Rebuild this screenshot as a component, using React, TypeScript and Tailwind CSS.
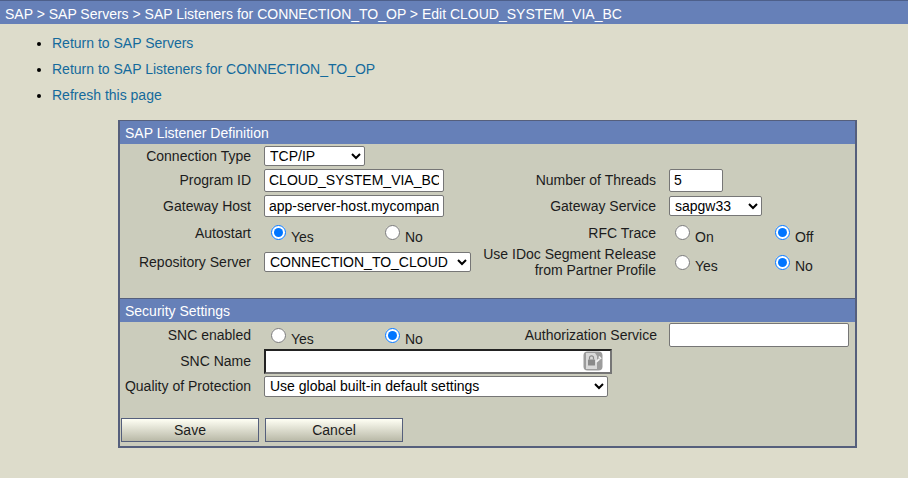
import { ReactNode } from "react";

function Label({ children, width = "w-[131px]" }: { children: ReactNode; width?: string }) {
  return <div className={`${width} shrink-0 text-right leading-4`}>{children}</div>;
}

function Radio({ label, checked, name, width }: { label: string; checked?: boolean; name: string; width: string }) {
  return (
    <label className={`${width} flex items-center shrink-0`}>
      <input type="radio" name={name} defaultChecked={checked} className="w-[15px] h-[15px] m-0" />
      <span className="ml-[5px] mt-2 leading-4">{label}</span>
    </label>
  );
}

function SectionHeader({ title }: { title: string }) {
  return <div className="h-[23px] bg-[#6680b8] text-white pl-[5px] leading-[24px]">{title}</div>;
}

const inputCls = "bg-white border border-[#767676] rounded-[2px] px-[4px] text-black outline-none";
const selectCls = "bg-white border border-[#767676] rounded-[2px] text-black pl-[1px]";

function KeyIcon() {
  return (
    <svg width="20" height="20" viewBox="0 0 20 20" className="shrink-0">
      <rect x="0.5" y="0.5" width="19" height="19" rx="4" fill="#9c9c9c" />
      <path d="M3 2 H12 L14 5 V18 H3 Z" fill="#d9d9d9" />
      <rect x="5" y="8.5" width="7" height="6" rx="0.5" fill="#8a8a8a" />
      <path d="M6.5 8.5 V6.8 a2 2 0 0 1 4 0 V8.5" fill="none" stroke="#8a8a8a" strokeWidth="1.2" />
      <path d="M13 11 L16.5 8 M16 5.5 L18 8" fill="none" stroke="#f0f0f0" strokeWidth="1.8" />
    </svg>
  );
}

export default function App() {
  return (
    <div className="min-h-[478px] bg-[#dddccb] text-[14px] text-[#1c1c1c] font-['Liberation_Sans',Arial,sans-serif]">
      <div className="h-6 bg-[#6680b8] border-t border-t-[#4d5f8a] text-white pl-[5px] leading-[26px]">
        SAP &gt; SAP Servers &gt; SAP Listeners for CONNECTION_TO_OP &gt; Edit CLOUD_SYSTEM_VIA_BC
      </div>

      <ul className="list-disc pl-[52px] pt-[10px] marker:text-black">
        {["Return to SAP Servers", "Return to SAP Listeners for CONNECTION_TO_OP", "Refresh this page"].map((t) => (
          <li key={t} className="h-[26px] leading-4 pt-[1px]">
            <a href="#" className="text-[#146a9c]">{t}</a>
          </li>
        ))}
      </ul>

      <div className="w-[739px] ml-[118px] mt-[8px] border-2 border-t-1 border-[#555f7c] bg-[#cbccbc]">
        <SectionHeader title="SAP Listener Definition" />

        {/* listener definition rows */}
        <div className="h-[154px]">
          <div className="flex items-center h-[23px] pt-[1px]">
            <Label>Connection Type</Label>
            <select defaultValue="TCP/IP" className={`${selectCls} ml-[13px] w-[101px] h-[20px]`}>
              <option>TCP/IP</option>
            </select>
          </div>
          <div className="flex items-center h-[26px]">
            <Label>Program ID</Label>
            <input defaultValue="CLOUD_SYSTEM_VIA_BC" className={`${inputCls} ml-[13px] w-[180px] h-[23px]`} />
            <Label width="w-[212px]">Number of Threads</Label>
            <input defaultValue="5" className={`${inputCls} ml-[13px] w-[54px] h-[23px]`} />
          </div>
          <div className="flex items-center h-[25px]">
            <Label>Gateway Host</Label>
            <input defaultValue="app-server-host.mycompany.com" className={`${inputCls} bg-[#e8f0fe] ml-[13px] w-[180px] h-[22px]`} />
            <Label width="w-[212px]">Gateway Service</Label>
            <select defaultValue="sapgw33" className={`${selectCls} ml-[13px] w-[93px] h-[20px]`}>
              <option>sapgw33</option>
            </select>
          </div>
          <div className="flex items-center h-[29px]">
            <Label>Autostart</Label>
            <div className="ml-[20px] flex">
              <Radio name="autostart" label="Yes" checked width="w-[114px]" />
              <Radio name="autostart" label="No" width="w-[75px]" />
            </div>
            <Label width="w-[196px]">RFC Trace</Label>
            <div className="ml-[19px] flex">
              <Radio name="rfc" label="On" width="w-[100px]" />
              <Radio name="rfc" label="Off" checked width="w-[60px]" />
            </div>
          </div>
          <div className="flex items-center h-[26px] mt-[2px]">
            <Label>Repository Server</Label>
            <select defaultValue="CONNECTION_TO_CLOUD" className={`${selectCls} ml-[13px] w-[207px] h-[20px]`}>
              <option>CONNECTION_TO_CLOUD</option>
            </select>
            <Label width="w-[185px]">
              Use IDoc Segment Release
              <br />
              from Partner Profile
            </Label>
            <div className="ml-[19px] flex">
              <Radio name="idoc" label="Yes" width="w-[100px]" />
              <Radio name="idoc" label="No" checked width="w-[60px]" />
            </div>
          </div>
        </div>

        <div className="border-t border-[#555f7c]">
          <SectionHeader title="Security Settings" />
        </div>

        {/* security rows */}
        <div className="h-[124px]">
          <div className="flex items-center h-[26px]">
            <Label>SNC enabled</Label>
            <div className="ml-[20px] flex">
              <Radio name="snc" label="Yes" width="w-[114px]" />
              <Radio name="snc" label="No" checked width="w-[75px]" />
            </div>
            <Label width="w-[197px]">Authorization Service</Label>
            <input className={`${inputCls} ml-[12px] w-[180px] h-[24px]`} />
          </div>
          <div className="flex items-center h-[26px]">
            <Label>SNC Name</Label>
            <div className="ml-[13px] w-[348px] h-[25px] bg-white border-2 border-t-[#222222] border-l-[#222222] border-r-[#767676] border-b-[#767676] flex items-center justify-end pr-[7px]">
              <KeyIcon />
            </div>
          </div>
          <div className="flex items-center h-[24px]">
            <Label>Quality of Protection</Label>
            <select defaultValue="Use global built-in default settings" className={`${selectCls} ml-[13px] w-[344px] h-[21px]`}>
              <option>Use global built-in default settings</option>
            </select>
          </div>
          <div className="flex gap-[6px] pl-[1px] pt-[20px]">
            {["Save", "Cancel"].map((b) => (
              <button
                key={b}
                className="w-[138px] h-[24px] border border-[#555f7c] bg-gradient-to-b from-[#fffff4] to-[#b9b9a7] text-center text-[#1c1c1c]"
              >
                {b}
              </button>
            ))}
          </div>
        </div>
      </div>
    </div>
  );
}
